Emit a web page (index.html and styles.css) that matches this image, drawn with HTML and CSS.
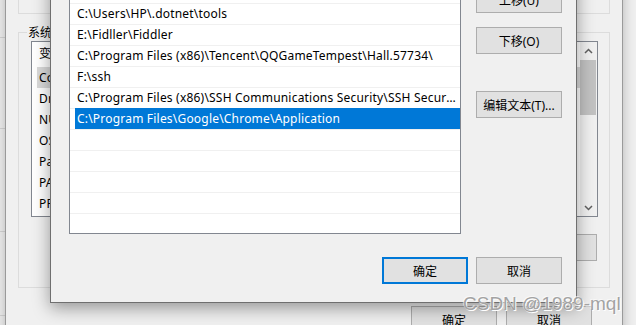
FILE: index.html
```html
<!DOCTYPE html>
<html lang="zh-CN">
<head>
    <meta charset="UTF-8">
    <title>编辑环境变量</title>
    <link rel="stylesheet" href="styles.css">
</head>
<body>
    <div class="desk">
        <!-- 环境变量 (背后的窗口) -->
        <div class="win back">
            <div class="grp grp-user"></div>
            <div class="grp grp-sys">
                <span class="grp-title">系统变量(S)</span>
                <div class="lv">
                    <div class="lv-main">
                        <div class="lv-head"><span class="col1">变量</span><span>值</span></div>
                        <div class="lv-row sel"><span class="cell">ComSpec</span></div>
                        <div class="lv-row"><span class="cell">DriverData</span></div>
                        <div class="lv-row"><span class="cell">NUMBER_OF_PROCESSORS</span></div>
                        <div class="lv-row"><span class="cell">OS</span></div>
                        <div class="lv-row"><span class="cell">Path</span></div>
                        <div class="lv-row"><span class="cell">PATHEXT</span></div>
                        <div class="lv-row"><span class="cell">PROCESSOR_ARCHITECTURE</span></div>
                    </div>
                    <div class="vscroll">
                        <div class="arr">
                            <svg width="9" height="6" viewBox="0 0 9 6"><polyline points="1,5 4.5,1.5 8,5" fill="none" stroke="#606060" stroke-width="1.5"/></svg>
                        </div>
                        <div class="thumb"></div>
                        <div class="track"></div>
                        <div class="arr">
                            <svg width="9" height="6" viewBox="0 0 9 6"><polyline points="1,1 4.5,4.5 8,1" fill="none" stroke="#606060" stroke-width="1.5"/></svg>
                        </div>
                    </div>
                </div>
                <div class="grp-btns">
                    <button class="btn">新建(W)...</button>
                    <button class="btn">编辑(I)...</button>
                    <button class="btn">删除(L)</button>
                </div>
            </div>
            <div class="win-foot">
                <button class="btn">确定</button>
                <button class="btn">取消</button>
            </div>
        </div>

        <!-- 编辑环境变量 -->
        <div class="win dlg">
            <div class="dlg-body">
                <div class="plist">
                    <div class="row"><span class="cell">%SystemRoot%\System32\WindowsPowerShell\v1.0\</span></div>
                    <div class="row"><span class="cell">C:\Program Files\nodejs\</span></div>
                    <div class="row"><span class="cell">C:\Users\HP\AppData\Local\Microsoft\WindowsApps</span></div>
                    <div class="row"><span class="cell">C:\Users\HP\.dotnet\tools</span></div>
                    <div class="row"><span class="cell">E:\Fidller\Fiddler</span></div>
                    <div class="row"><span class="cell">C:\Program Files (x86)\Tencent\QQGameTempest\Hall.57734\</span></div>
                    <div class="row"><span class="cell">F:\ssh</span></div>
                    <div class="row"><span class="cell">C:\Program Files (x86)\SSH Communications Security\SSH Secure Shell</span></div>
                    <div class="row sel"><span class="cell">C:\Program Files\Google\Chrome\Application</span></div>
                    <div class="row"></div>
                    <div class="row"></div>
                    <div class="row"></div>
                    <div class="row"></div>
                    <div class="row"></div>
                </div>
                <div class="side">
                    <button class="btn">上移(U)</button>
                    <button class="btn btn-down">下移(O)</button>
                    <button class="btn btn-text">编辑文本(T)...</button>
                </div>
            </div>
            <div class="dlg-foot">
                <button class="btn btn-def">确定</button>
                <button class="btn">取消</button>
            </div>
        </div>

        <div class="mark">CSDN @1989-mql</div>
    </div>
</body>
</html>
```

FILE: styles.css
```css
html {
    overflow: hidden;
}
body {
    margin: 0;
    width: 636px;
    height: 325px;
    overflow: hidden;
    font-family: "Noto Sans", "Noto Sans CJK SC", sans-serif;
    font-size: 12px;
    color: #000;
    background:
        linear-gradient(#d6d6d6, #d6d6d6) 0 37px / 5px 1px no-repeat,
        linear-gradient(#d6d6d6, #d6d6d6) 0 128px / 5px 1px no-repeat,
        linear-gradient(#d6d6d6, #d6d6d6) 0 231px / 5px 1px no-repeat,
        linear-gradient(#d6d6d6, #d6d6d6) 0 315px / 5px 1px no-repeat,
        #f0f0f0;
}
.desk {
    position: relative;
    width: 636px;
    height: 325px;
    overflow: hidden;
}
.win {
    position: absolute;
    box-sizing: border-box;
    background: #f0f0f0;
}
.btn {
    box-sizing: border-box;
    width: 86px;
    height: 27px;
    padding: 0;
    background: #e1e1e1;
    border: 1px solid #adadad;
    font-family: inherit;
    font-size: 12px;
    color: #000;
}

/* back window */
.back {
    left: 5px;
    top: -60px;
    width: 618px;
    height: 420px;
    border: 1px solid #9a9a9a;
    padding: 19px 0 0 12px;
    box-shadow: 0 0 12px rgba(0, 0, 0, 0.25);
}
.grp {
    box-sizing: border-box;
    width: 592px;
    border: 1px solid #dcdcdc;
}
.grp-user {
    height: 54px;
}
.grp-sys {
    margin-top: 18px;
    height: 256px;
    padding: 0 11px 0 12px;
}
.grp-title {
    display: table;
    margin: -9px 0 0 -4px;
    padding: 0 1px;
    line-height: 17px;
    background: #f0f0f0;
}
.lv {
    display: flex;
    box-sizing: border-box;
    height: 176px;
    border: 1px solid #828790;
    background: #fff;
}
.lv-main {
    flex: 1;
    overflow: hidden;
}
.lv-head {
    display: flex;
    height: 25px;
    line-height: 23px;
    padding-left: 7px;
}
.lv-head .col1 {
    width: 150px;
    border-right: 1px solid #e5e5e5;
}
.lv-head span + span {
    padding-left: 6px;
}
.lv-row {
    height: 21px;
}
.lv-row .cell {
    display: block;
    margin-left: 5px;
    padding-left: 2px;
    line-height: 21px;
    letter-spacing: 0.2px;
}
.lv-row.sel .cell {
    background: #d9d9d9;
}
.vscroll {
    display: flex;
    flex-direction: column;
    width: 17px;
    background: #f0f0f0;
}
.arr {
    height: 17px;
    display: flex;
    align-items: center;
    justify-content: center;
}
.thumb {
    margin: 1px 1px 0 0;
    height: 55px;
    background: #c2c2c2;
}
.track {
    flex: 1;
}
.grp-btns {
    display: flex;
    justify-content: flex-end;
    gap: 9px;
    margin-top: 17px;
    padding-right: 1px;
}
.win-foot {
    display: flex;
    justify-content: flex-end;
    gap: 9px;
    margin-top: 18px;
    padding-right: 30px;
}

/* edit dialog */
.dlg {
    left: 50px;
    top: -100px;
    width: 527px;
    height: 403px;
    border: 1px solid #6f6f6f;
    box-shadow: 0 5px 16px rgba(0, 0, 0, 0.38);
}
.dlg-body {
    display: flex;
    gap: 15px;
    margin-top: 38px;
    padding: 0 14px 0 18px;
}
.plist {
    box-sizing: border-box;
    width: 392px;
    height: 295px;
    border: 1px solid #828790;
    background: #fff;
    overflow: hidden;
}
.row {
    box-sizing: border-box;
    height: 21px;
    border-top: 1px solid #f0f0f0;
}
.row .cell {
    display: block;
    margin-left: 5px;
    padding-left: 2px;
    line-height: 20px;
    letter-spacing: 0.2px;
    white-space: nowrap;
    overflow: hidden;
    text-overflow: ellipsis;
}
.row.sel .cell {
    margin-top: -1px;
    height: 21px;
    line-height: 21px;
    background: #0078d7;
    color: #fff;
}
.side {
    display: flex;
    flex-direction: column;
    padding-top: 47px;
}
.btn-down {
    margin-top: 14px;
}
.btn-text {
    margin-top: 37px;
}
.dlg-foot {
    display: flex;
    justify-content: flex-end;
    gap: 8px;
    margin-top: 23px;
    padding-right: 14px;
}
.btn-def {
    border: 2px solid #0078d7;
}

/* watermark */
.mark {
    position: absolute;
    left: 463px;
    top: 294px;
    font-family: "Liberation Sans", Arial, sans-serif;
    font-size: 19px;
    line-height: 19px;
    color: #a3a3a3;
    text-shadow: 1px 1px 0 #fff, -1px -1px 0 rgba(255, 255, 255, 0.6);
}
```
